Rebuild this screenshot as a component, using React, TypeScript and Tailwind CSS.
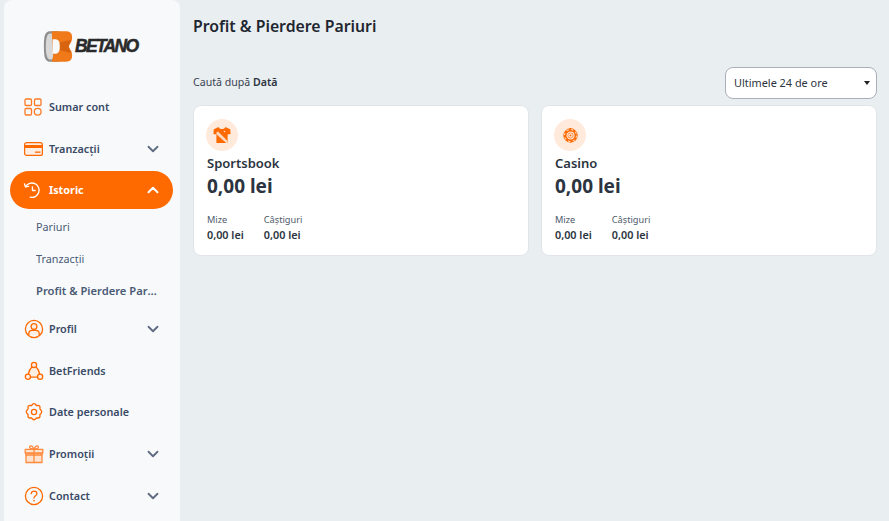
import { ChevronDown, ChevronUp } from "lucide-react";
import type { ReactNode } from "react";

const OrangeIcon = ({ children }: { children: ReactNode }) => (
  <svg width="20" height="20" viewBox="0 0 20 20" fill="none" stroke="#ff6a00" strokeWidth="1.3" strokeLinecap="round" strokeLinejoin="round">
    {children}
  </svg>
);

const SummaryIcon = () => (
  <svg width="18" height="18" viewBox="0 0 18 18" fill="none" stroke="#ff7a26" strokeWidth="1.3">
    <rect x="1" y="1" width="6.5" height="6.5" rx="1.2" />
    <rect x="10.5" y="1" width="6.5" height="6.5" rx="1.2" />
    <rect x="1" y="10.5" width="6.5" height="6.5" rx="1.2" />
    <circle cx="13.7" cy="13.7" r="3.4" />
  </svg>
);

const CardIcon = () => (
  <svg width="19" height="14" viewBox="0 0 19 14">
    <rect x="0.6" y="0.6" width="17.8" height="12.8" rx="2" fill="#ffeee2" stroke="#ff6a00" strokeWidth="1.2" />
    <rect x="0.6" y="3" width="17.8" height="3" fill="#ff6a00" />
    <rect x="11" y="9.500" width="5.500" height="1.300" fill="#ff6a00" />
  </svg>
);

const HistoryIcon = () => (
  <svg width="18" height="18" viewBox="0 0 20 20" fill="none" stroke="white" strokeWidth="1.5" strokeLinecap="round" strokeLinejoin="round">
    <path d="M3 6.200A8 8 0 1 1 8 18" />
    <path d="M1.600 3.200 2.800 6.600 6.200 6" />
    <path d="M10.500 6.500v4h3" />
  </svg>
);

const ProfileIcon = () => (
  <OrangeIcon>
    <circle cx="10" cy="10" r="8.600" />
    <circle cx="10" cy="7.600" r="2.900" fill="#ffeee2" />
    <path d="M4.800 16.200v-1.700c0-2 1.600-3.200 3.200-3.200h4c1.600 0 3.200 1.200 3.200 3.200v1.700" fill="#ffeee2" />
  </OrangeIcon>
);

const FriendsIcon = () => (
  <OrangeIcon>
    <path d="M8 5.500 4 13.500 7 16h6l3-2.500-4-8z" fill="#ffeee2" stroke="none" />
    <path d="M8 5.800C6.200 7.600 5 10 4.400 13M12 5.800c1.800 1.800 3 4.200 3.600 7.200M6.800 16.200h6.400" />
    <circle cx="10" cy="3.900" r="2.600" fill="#ffeee2" />
    <circle cx="3.900" cy="15.700" r="2.600" fill="#ffeee2" />
    <circle cx="16.100" cy="15.700" r="2.600" fill="#ffeee2" />
  </OrangeIcon>
);

const GearIcon = () => (
  <OrangeIcon>
    <path d="M8.500 2.300c.8-.7 2.200-.7 3 0l.9 1.200 1.600-.1c1 0 2 1 2 2l-.1 1.500 1.200 1.300c.7.800.7 2.200 0 3l-1.200 1.300.1 1.500c0 1-1 2-2 2l-1.600-.1-.9 1.200c-.8.700-2.200.7-3 0l-.9-1.200-1.600.1c-1 0-2-1-2-2l.1-1.500-1.200-1.300c-.7-.8-.7-2.200 0-3l1.200-1.300-.1-1.500c0-1 1-2 2-2l1.600.1z" />
    <circle cx="10" cy="10" r="2.600" />
  </OrangeIcon>
);

const GiftIcon = () => (
  <OrangeIcon>
    <rect x="2" y="9" width="16" height="9.500" fill="#ffe3cf" stroke="#ff8a3d" />
    <rect x="1.200" y="5.400" width="17.600" height="3.600" fill="#ffe3cf" stroke="#ff8a3d" />
    <path d="M10 5.400v13.100M2 11h16" stroke="#ff8a3d" />
    <path d="M10 5.200C8.500 1.500 5.800 1 5.600 3c-.1 1.600 2.200 2.200 4.400 2.200 2.200 0 4.500-.6 4.400-2.200-.2-2-2.900-1.500-4.400 2.200z" stroke="#ff8a3d" />
  </OrangeIcon>
);

const HelpIcon = () => (
  <OrangeIcon>
    <circle cx="10" cy="10" r="8.600" />
    <path d="M7.200 7.700C7.400 6 8.600 5.200 10 5.200c1.600 0 2.900 1 2.900 2.500 0 2-2.900 2.200-2.900 4.400" />
    <path d="M10 14.600v.2" strokeWidth="1.600" />
  </OrangeIcon>
);

const ShirtIcon = () => (
  <svg width="18" height="18" viewBox="0 0 18 18">
    <path d="M5.600 1 .8 3.200.4 8l3 .6V17h11.200V8.600l3-.6-.4-4.800L12.400 1c-.6 1.400-1.800 2-3.400 2s-2.800-.6-3.400-2z" fill="#ff6a00" />
    <path d="M3.400 8.200V6.400L5 5.600l9.600 9.400V17h-1.400z" fill="#ffd9bf" />
    <circle cx="11.500" cy="5.500" r="0.800" fill="#ffd9bf" />
  </svg>
);

const RouletteIcon = () => (
  <svg width="15" height="15" viewBox="0 0 16 16" fill="none">
    <circle cx="8" cy="8" r="6" stroke="#ff6a00" strokeWidth="3.400" />
    <circle cx="8" cy="8" r="6.400" stroke="#ffd9bf" strokeWidth="1.100" strokeDasharray="2.500 2.500" />
    <circle cx="8" cy="8" r="2.800" stroke="#ff8a3d" strokeWidth="1" />
    <circle cx="8" cy="8" r="1" fill="#ff6a00" />
    <circle cx="8" cy="0.800" r="0.900" fill="#ff6a00" />
  </svg>
);

const Logo = () => (
  <div className="flex items-center pl-[39px] gap-[2px] h-[86px] pt-[6px]">
    <svg width="30" height="33" viewBox="0 0 31 33">
      <path d="M7 .8h10v31.400H7c-3 0-5-2.500-5.600-6.500-.7-5.500-.7-13 0-18.500C2 3.300 4 .8 7 .8z" fill="#8f8f8f" />
      <path d="M6.500 3h4v27h-4C5 29.500 3.800 27 3.300 23.500c-.5-4.500-.5-9.500 0-14C3.800 6 5 3.500 6.500 3z" fill="#d8d8d8" />
      <path d="M9 .8h15c3.500 0 5.500 1.800 6 4.500.4 3.200-.4 6.700-2.400 8.800L26.500 16.500l1.100 2.400c2 2.100 2.800 5.600 2.400 8.800-.5 2.700-2.500 4.500-6 4.500H9l1.500-6z" fill="#f07a1a" />
      <path d="M10 9h3c2 0 3.500 1.500 4 3.500.5 2.500.5 5.500 0 8C16.500 22.500 15 24 13 24h-3z" fill="#f7f9fb" />
      <path d="M17.500 12 29 9.500l-2.500 7 2.500 7-11.500-3z" fill="#d9640f" />
    </svg>
    <span className="text-[17.500px] font-bold italic tracking-[-1.700px] text-[#2a2a2a] font-['Liberation_Sans',sans-serif] [-webkit-text-stroke:0.5px_#2a2a2a]">
      BETANO
    </span>
  </div>
);

const NavRow = ({ icon, label, chevron }: { icon: ReactNode; label: string; chevron?: boolean }) => (
  <div className="h-[41.750px] flex items-center pl-[10px] pr-[8px] mx-[10px]">
    <span className="w-[25px] flex justify-start items-center">{icon}</span>
    <span className="flex-1 text-[10.800px] font-semibold text-[#3a4a66]">{label}</span>
    {chevron && <ChevronDown size={18} strokeWidth={2.400} className="text-[#5f6b80]" />}
  </div>
);

const SubRow = ({ label, bold }: { label: string; bold?: boolean }) => (
  <div className={`h-[32px] flex items-center pl-[32px] pr-[21px] text-[#4a5a75] ${bold ? "text-[11.200px] font-semibold" : "text-[10.800px]"}`}>
    <span className="truncate">{label}</span>
  </div>
);

const Stat = ({ label }: { label: string }) => (
  <div className="flex flex-col">
    <span className="text-[9.200px] leading-[15px] text-[#4e5a6b]">{label}</span>
    <span className="text-[10.800px] leading-[15px] font-semibold text-[#2b3440]">0,00 lei</span>
  </div>
);

const ResultCard = ({ icon, title }: { icon: ReactNode; title: string }) => (
  <div className="flex-1 h-[151px] bg-white rounded-lg border border-[#e1e5ea] pl-[13px] pt-[13px]">
    <div className="-ml-[1px] w-[32px] h-[32px] rounded-full bg-[#ffeadc] flex items-center justify-center">{icon}</div>
    <div className="mt-[2px] text-[13px] leading-[20px] font-semibold text-[#2b3440]">{title}</div>
    <div className="text-[19px] leading-[26px] font-bold text-[#2b3440]">0,00 lei</div>
    <div className="flex gap-[20px] mt-[13px]">
      <Stat label="Mize" />
      <Stat label="Câștiguri" />
    </div>
  </div>
);

const App = () => {
  return (
    <div className="flex h-[521px] w-[889px] overflow-hidden bg-[#e9eef1] font-['Noto_Sans',sans-serif]">
      <aside className="ml-[4px] w-[176px] shrink-0 bg-[#f7f9fb] rounded-t-lg">
        <Logo />
        <NavRow icon={<SummaryIcon />} label="Sumar cont" />
        <NavRow icon={<CardIcon />} label="Tranzacții" chevron />
        <div className="mt-[1.500px] ml-[6px] mr-[7px] h-[38px] rounded-full bg-[#ff6a00] flex items-center pl-[13px] pr-[11px] text-white">
          <span className="w-[26px] flex items-center"><HistoryIcon /></span>
          <span className="flex-1 text-[10.800px] font-bold">Istoric</span>
          <ChevronUp size={18} strokeWidth={2.600} />
        </div>
        <div className="pt-[2px] pb-[1px]">
          <SubRow label="Pariuri" />
          <SubRow label="Tranzacții" />
          <SubRow label="Profit & Pierdere Pariuri" bold />
        </div>
        <NavRow icon={<ProfileIcon />} label="Profil" chevron />
        <NavRow icon={<FriendsIcon />} label="BetFriends" />
        <NavRow icon={<GearIcon />} label="Date personale" />
        <NavRow icon={<GiftIcon />} label="Promoții" chevron />
        <NavRow icon={<HelpIcon />} label="Contact" chevron />
      </aside>
      <main className="flex-1 pl-[13px] pr-[12px]">
        <h1 className="mt-[15px] text-[15.800px] leading-[22px] font-semibold text-[#1f2630]">Profit &amp; Pierdere Pariuri</h1>
        <div className="mt-[30px] flex items-center justify-between h-[32px]">
          <span className="text-[10.600px] text-[#3a4250]">
            Caută după <b className="font-semibold text-[#2b3440]">Dată</b>
          </span>
          <div className="w-[152px] h-[32px] bg-white rounded-lg border border-[#a9b0ba] flex items-center justify-between pl-[8px] pr-[6px] text-[10.900px] text-[#2b3440]">
            Ultimele 24 de ore
            <span className="w-0 h-0 border-x-[3.500px] border-x-transparent border-t-[4px] border-t-[#222]" />
          </div>
        </div>
        <div className="mt-[6px] flex gap-[12px]">
          <ResultCard icon={<ShirtIcon />} title="Sportsbook" />
          <ResultCard icon={<RouletteIcon />} title="Casino" />
        </div>
      </main>
    </div>
  );
};

export default App;
